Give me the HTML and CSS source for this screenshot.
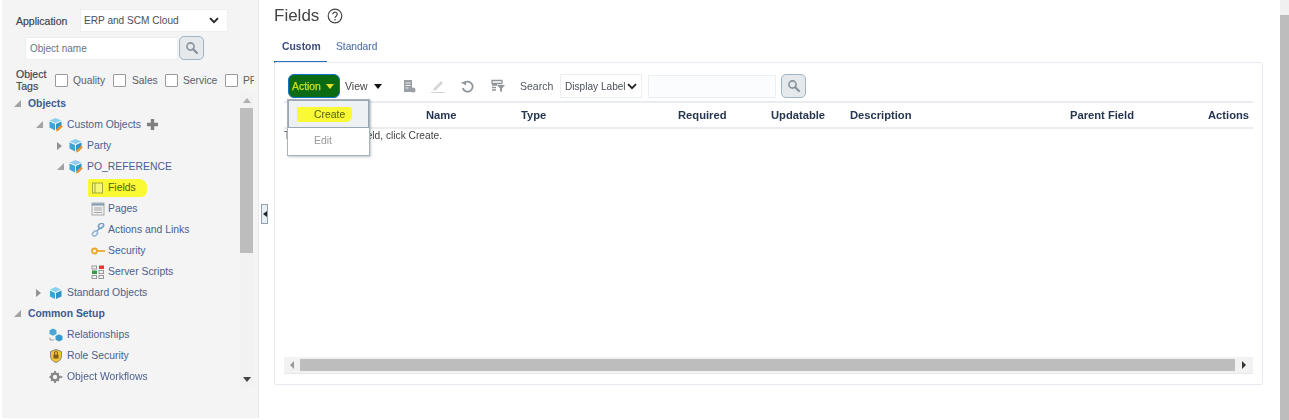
FILE: index.html
```html
<!DOCTYPE html>
<html lang="en">
<head>
<meta charset="utf-8">
<title>Fields</title>
<link rel="stylesheet" href="styles.css">
</head>
<body>
<svg class="defs" width="0" height="0" aria-hidden="true">
  <symbol id="i-cube" viewBox="0 0 14 14">
    <path d="M6.500 1 12 3.500 6.500 6 1 3.500Z" fill="#8ccfee"/>
    <path d="M1 4.500 6 7v6L1 10.500Z" fill="#3aa5d8"/>
    <path d="M7 7l5.500-2.500v6L7 13Z" fill="#2b94c8"/>
  </symbol>
  <symbol id="i-cube-edit" viewBox="0 0 14 14">
    <path d="M6.500 0 12.500 2.500 6.500 5 .5 2.500Z" fill="#8ccfee"/>
    <path d="M.5 3.500 6 6v6.500L.5 9.500Z" fill="#3aa5d8"/>
    <path d="M7 6l5.500-2.500v4L7 12Z" fill="#2b94c8"/>
    <path d="M7 13.500l.6-2.500 4.400-4.200 1.800 1.800-4.400 4.200Z" fill="#e8912d"/>
  </symbol>
  <symbol id="i-search" viewBox="0 0 14 14">
    <circle cx="5.500" cy="5.500" r="3.600" fill="none" stroke="#87929b" stroke-width="1.600"/>
    <path d="M8.200 8.200 12 12" stroke="#87929b" stroke-width="2.200" stroke-linecap="round"/>
  </symbol>
  <symbol id="i-chev" viewBox="0 0 10 7">
    <path d="M1 1.200 5 5.200 9 1.200" fill="none" stroke="#222" stroke-width="1.800"/>
  </symbol>
</svg>

<div class="page">
  <aside class="side">
    <div class="app-row">
      <span class="app-label">Application</span>
      <div class="fake-select app-select"><span>ERP and SCM Cloud</span><svg class="chev"><use href="#i-chev"/></svg></div>
    </div>
    <div class="search-row">
      <div class="fake-input side-input">Object name</div>
      <button class="search-btn" type="button" aria-label="Search"><svg class="search-ico"><use href="#i-search"/></svg></button>
    </div>
    <div class="tags-row">
      <span class="tags-label">Object Tags</span>
      <span class="cb"></span><span class="tag tag-q">Quality</span>
      <span class="cb"></span><span class="tag tag-s">Sales</span>
      <span class="cb"></span><span class="tag tag-v">Service</span>
      <span class="cb"></span><span class="tag">PF</span>
    </div>

    <div class="tree-wrap">
      <ul class="tree">
        <li class="row l0"><span class="tw tw-open"></span><span class="head-label">Objects</span></li>
        <li class="row l1"><span class="tw tw-open"></span><svg class="ico"><use href="#i-cube-edit"/></svg><span>Custom Objects</span>
          <svg class="plus" viewBox="0 0 13 13"><path d="M6.500 1v11M1 6.500h11" stroke="#7f7f7f" stroke-width="3.400"/></svg></li>
        <li class="row l2"><span class="tw tw-closed"></span><svg class="ico"><use href="#i-cube-edit"/></svg><span>Party</span></li>
        <li class="row l2"><span class="tw tw-open"></span><svg class="ico"><use href="#i-cube-edit"/></svg><span>PO_REFERENCE</span></li>
        <li class="row l3"><span class="hl hl-fields">
          <svg class="ico" viewBox="0 0 14 14"><rect x="1.500" y="2" width="10" height="10" fill="#f6f67a" stroke="#a5a83a"/><path d="M4 2v10" stroke="#a5a83a"/></svg><span>Fields</span></span></li>
        <li class="row l3"><svg class="ico" viewBox="0 0 14 14"><rect x="1" y="1" width="12" height="12" fill="#eee" stroke="#a8a8a8"/><path d="M1 2.500h12" stroke="#7f9ab5" stroke-width="2"/><path d="M3 6h8M3 8h8M3 10.500h8" stroke="#aaa"/></svg><span>Pages</span></li>
        <li class="row l3"><svg class="ico" viewBox="0 0 14 14"><path d="M5.500 8.500 8.500 5.500" stroke="#6f9fc8" stroke-width="1.600"/><rect x="7.500" y="0.800" width="5.500" height="4" rx="2" transform="rotate(-45 10 3)" fill="none" stroke="#6f9fc8" stroke-width="1.600"/><rect x="1.200" y="8.500" width="5.500" height="4" rx="2" transform="rotate(-45 4 10.500)" fill="none" stroke="#9ab8d2" stroke-width="1.600"/></svg><span>Actions and Links</span></li>
        <li class="row l3"><svg class="ico" viewBox="0 0 14 14"><circle cx="3.500" cy="7" r="2.500" fill="none" stroke="#eaa92e" stroke-width="1.800"/><path d="M6 7h8" stroke="#eaa92e" stroke-width="1.800"/></svg><span>Security</span></li>
        <li class="row l3"><svg class="ico" viewBox="0 0 14 14"><rect x="1" y="1" width="4.500" height="3" fill="none" stroke="#999"/><rect x="8" y="0.500" width="5" height="3.500" fill="#e33"/><rect x="1" y="5.500" width="5" height="3.500" fill="#3a9a4a"/><rect x="8" y="5.500" width="4.500" height="3" fill="none" stroke="#999"/><rect x="1" y="10.500" width="4.500" height="3" fill="none" stroke="#999"/><rect x="8" y="10.500" width="4.500" height="3" fill="none" stroke="#999"/></svg><span>Server Scripts</span></li>
        <li class="row l1"><span class="tw tw-closed"></span><svg class="ico"><use href="#i-cube"/></svg><span>Standard Objects</span></li>
        <li class="row l0"><span class="tw tw-open"></span><span class="head-label">Common Setup</span></li>
        <li class="row l1c"><svg class="ico" viewBox="0 0 14 14"><path d="M4 .5 7.500 2.200V6L4 7.700.5 6V2.200Z" fill="#4aa8d8"/><path d="M10 6.300 13.500 8v3.800L10 13.500 6.500 11.800V8Z" fill="#3a9ad0"/><path d="M1 9.500v2.500h4" fill="none" stroke="#9a9a9a"/></svg><span>Relationships</span></li>
        <li class="row l1c"><svg class="ico" viewBox="0 0 14 14"><path d="M7 .5 12.500 2.500V7c0 3.500-2.500 5.500-5.500 6.500C4 12.500 1.500 10.500 1.500 7V2.500Z" fill="#f2c230" stroke="#8a8a8a"/><rect x="4.500" y="5.500" width="5" height="4" fill="#7a5a20"/><path d="M5.500 5.500V4a1.500 1.500 0 0 1 3 0v1.500" fill="none" stroke="#7a5a20"/></svg><span>Role Security</span></li>
        <li class="row l1c"><svg class="ico" viewBox="0 0 14 14"><circle cx="6" cy="7" r="3.400" fill="none" stroke="#858585" stroke-width="2.400"/><path d="M6 1v2M6 11v2M0.500 7h2M9.500 7h2M2.200 3.200l1.400 1.400M9.800 3.200 8.400 4.600M2.200 10.800l1.400-1.400M9.800 10.800 8.400 9.400" stroke="#858585" stroke-width="1.800"/><path d="M11.500 5.500 14 7l-2.500 1.500Z" fill="#858585"/></svg><span>Object Workflows</span></li>
      </ul>
      <div class="tree-scroll">
        <span class="arrow-box"><span class="arr-up"></span></span>
        <span class="thumb-v"></span>
        <span class="spacer"></span>
        <span class="arrow-box"><span class="arr-down"></span></span>
      </div>
    </div>
  </aside>

  <div class="splitter"><span class="handle"><span class="arr-left-dark"></span></span></div>

  <main class="main">
    <div class="title-row">
      <h1 class="title">Fields</h1>
      <svg class="help" viewBox="0 0 16 16"><circle cx="8" cy="8" r="6.800" fill="none" stroke="#444" stroke-width="1.200"/><path d="M5.800 6.200a2.200 2.100 0 1 1 3.500 1.700c-.9.600-1.300 1-1.300 2" fill="none" stroke="#444" stroke-width="1.200"/><circle cx="8" cy="11.800" r=".8" fill="#444"/></svg>
    </div>
    <nav class="tabs">
      <span class="tab tab-on">Custom</span>
      <span class="tab">Standard</span>
    </nav>
    <section class="panel">
      <div class="toolbar">
        <div class="action-wrap">
          <button class="action" type="button">Action<span class="arr-yellow"></span></button>
          <div class="menu">
            <div class="menu-item menu-on"><span class="hl hl-create">Create</span></div>
            <div class="menu-item menu-off">Edit</div>
          </div>
        </div>
        <span class="view">View<span class="arr-black"></span></span>
        <svg class="tb-ico tb-first" viewBox="0 0 14 14"><path d="M2 1h8v12H2Z" fill="#9a9fa5"/><path d="M3.500 4h5M3.500 6.500h5M3.500 9h3" stroke="#eee"/><circle cx="11" cy="11" r="2.500" fill="#9a9fa5"/></svg>
        <svg class="tb-ico" viewBox="0 0 14 14"><path d="M3 9 10 2l2 2-7 7-3 1Z" fill="#d5d5d5"/><path d="M0 13.500h14" stroke="#d5d5d5"/></svg>
        <svg class="tb-ico" viewBox="0 0 14 14"><path d="M4 4.200a5 5 0 1 1-1.200 4.800" fill="none" stroke="#8b9298" stroke-width="1.700"/><path d="M1 3h5v4Z" fill="#8b9298" transform="rotate(-10 3 5)"/></svg>
        <svg class="tb-ico tb-last" viewBox="0 0 14 14"><path d="M1 1.500h10v3H1ZM1 6h5M1 8.500h4M1 11h4" fill="none" stroke="#8f969c" stroke-width="1.300"/><path d="M6 6h8l-3 3.500V13l-2-1V9.500Z" fill="#8f969c"/></svg>
        <span class="search-label">Search</span>
        <div class="fake-select tb-select"><span class="clip">Display Label</span><svg class="chev"><use href="#i-chev"/></svg></div>
        <div class="fake-input tb-input"></div>
        <button class="search-btn tb-btn" type="button" aria-label="Search"><svg class="search-ico"><use href="#i-search"/></svg></button>
      </div>

      <div class="thead">
        <span class="th c-sel"></span>
        <span class="th c-name">Name</span>
        <span class="th c-type">Type</span>
        <span class="th c-req">Required</span>
        <span class="th c-upd">Updatable</span>
        <span class="th c-desc">Description</span>
        <span class="th c-par">Parent Field</span>
        <span class="th">Actions</span>
      </div>
      <div class="tbody">To add a custom field, click Create.</div>
      <div class="hscroll">
        <span class="arrow-box-h"><span class="arr-left"></span></span>
        <span class="thumb-h"></span>
        <span class="arrow-box-h"><span class="arr-right"></span></span>
      </div>
    </section>
  </main>

  <div class="vscroll"><span class="vscroll-top"></span><span class="vscroll-thumb"></span></div>
</div>
</body>
</html>
```

FILE: styles.css
```css
* { box-sizing: border-box; }
html, body { margin: 0; padding: 0; background: #fff; }
body { font-family: "Liberation Sans", Arial, sans-serif; color: #444; overflow: hidden; }
.defs { position: absolute; }
.page { display: flex; width: 1289px; height: 420px; overflow: hidden; filter: blur(.45px); }

/* sidebar */
.side { width: 257px; height: 418px; margin-left: 2px; padding-top: 9px; background: #f4f4f4; border-right: 1px solid #e6e9ee; flex: none; }
.app-row { display: flex; align-items: center; height: 23px; padding-left: 14px; }
.app-label { width: 64px; font-size: 10.500px; color: #3f4650; -webkit-text-stroke: .2px #3f4650; }
.fake-select { display: flex; align-items: center; justify-content: space-between; background: #fff; border: 1px solid #eceef0; font-size: 10.100px; color: #4a5058; }
.app-select { width: 148px; height: 23px; padding: 0 8px 0 3px; }
.chev { width: 10px; height: 7px; flex: none; }
.search-row { display: flex; align-items: center; height: 24px; margin-top: 4px; padding-left: 23px; }
.fake-input { background: #fff; border: 1px solid #eceef0; font-size: 10px; color: #6b7280; display: flex; align-items: center; }
.side-input { width: 153px; height: 23px; padding-left: 4px; }
.search-btn { display: flex; align-items: center; justify-content: center; width: 25px; height: 24px; margin: 0 0 0 1px; padding: 0; background: #e6e9ec; border: 1px solid #9fb4c4; border-radius: 5px; }
.search-ico { width: 14px; height: 14px; }
.tags-row { display: flex; align-items: center; width: 252px; height: 24px; margin-top: 8px; padding-left: 14px; overflow: hidden; white-space: nowrap; }
.tags-label { width: 39px; flex: none; white-space: normal; font-size: 10.500px; line-height: 12px; color: #3f4650; -webkit-text-stroke: .2px #3f4650; }
.cb { width: 13px; height: 13px; flex: none; background: #fff; border: 1px solid #9a9a9a; border-radius: 1px; }
.tag { margin-left: 5px; font-size: 10.300px; color: #5a6068; flex: none; }
.tag-q { width: 40px; }
.tag-s { width: 33px; margin-left: 6px; }
.tag-v { width: 42px; }

.tree-wrap { display: flex; height: 294px; margin-top: 1px; padding-right: 5px; }
.tree { flex: 1; min-width: 0; margin: 0; padding: 0; list-style: none; }
.row { display: flex; align-items: center; height: 21px; font-size: 10.400px; color: #4b5f8e; white-space: nowrap; }
.l0 { padding-left: 12px; }
.l1 { padding-left: 34px; }
.l1c { padding-left: 47px; }
.l2 { padding-left: 55px; }
.l3 { padding-left: 89px; }
.tw { flex: none; width: 0; height: 0; border-style: solid; }
.tw-open { margin-right: 6px; border-width: 0 0 7px 7px; border-color: transparent transparent #a2a2a2 transparent; }
.tw-closed { margin-right: 8px; border-width: 4.500px 0 4.500px 5px; border-color: transparent transparent transparent #939393; }
.l0 .tw-open { margin-right: 7px; }
.l2 .tw-open { margin-right: 5px; }
.l2 .tw-closed { margin-right: 7px; }
.head-label { font-weight: bold; color: #3d5a94; font-size: 10.400px; }
.ico { width: 14px; height: 14px; margin-right: 4px; flex: none; }
.l3 .ico { margin-right: 3px; }
.plus { width: 13px; height: 13px; margin-left: 5px; }
.hl { background: #f9f934; }
.hl-fields { display: inline-flex; align-items: center; height: 18px; margin-left: -3px; padding: 0 11px 0 3px; color: #4f6210; border-radius: 2px 8px 6px 2px; }
.tree-scroll { display: flex; flex-direction: column; width: 13px; flex: none; background: #f2f2f2; }
.arrow-box { display: flex; align-items: center; justify-content: center; height: 15px; flex: none; }
.thumb-v { height: 145px; background: #bdbdbd; flex: none; }
.spacer { flex: 1; }
.arr-up { border-style: solid; border-width: 0 4px 5px 4px; border-color: transparent transparent #b0b0b0 transparent; }
.arr-down { border-style: solid; border-width: 5px 4px 0 4px; border-color: #444 transparent transparent transparent; }

/* splitter */
.splitter { display: flex; align-items: center; width: 15px; height: 428px; padding-left: 2px; flex: none; }
.handle { display: flex; align-items: center; justify-content: center; width: 7px; height: 20px; background: #e9eef3; border: 1px solid #8fa3b5; }
.arr-left-dark { border-style: solid; border-width: 3px 4px 3px 0; border-color: transparent #222 transparent transparent; }

/* main */
.main { display: flex; flex-direction: column; flex: 1; min-width: 0; padding: 6px 8px 0 0; }
.title-row { display: flex; align-items: center; height: 20px; }
.title { margin: 0; font-size: 17px; font-weight: normal; line-height: 20px; color: #444; }
.help { width: 16px; height: 16px; margin-left: 8px; }
.tabs { display: flex; height: 37px; padding-top: 11px; }
.tab { display: block; width: 53px; height: 26px; padding: 4px 0 0 8px; font-size: 10.200px; font-weight: normal; color: #5a78a8; white-space: nowrap; -webkit-text-stroke: .15px #5a78a8; }
.tab-on { border-bottom: 2px solid #2d6fb8; color: #3c4a7a; font-size: 10.400px; font-weight: bold; -webkit-text-stroke: 0; }
.tab + .tab { padding-left: 9px; }
.panel { display: flex; flex-direction: column; width: 989px; height: 323px; margin-top: -1px; padding: 0 9px; border: 1px solid #e5ebf1; border-radius: 2px; }
.toolbar { display: flex; align-items: center; height: 38px; padding: 8px 0 0 4px; flex: none; }
.action-wrap { position: relative; flex: none; }
.action { display: flex; align-items: center; width: 52px; height: 24px; margin: 0; padding: 0 0 0 3px; background: #0a6b12; border: 1px solid #1273c9; border-radius: 6px; font: normal 10.400px "Liberation Sans", Arial, sans-serif; color: #c8e020; -webkit-text-stroke: .25px #c8e020; }
.arr-yellow { margin-left: 5px; border-style: solid; border-width: 5px 4px 0 4px; border-color: #e3e32a transparent transparent transparent; }
.menu { position: absolute; top: 100%; left: -1px; z-index: 5; width: 83px; height: 57px; margin-top: 1px; background: #fff; border: 1px solid #a9b3bc; box-shadow: 1px 1px 2px rgba(70, 90, 110, .35); }
.menu-item { display: flex; align-items: center; font-size: 10.400px; }
.menu-on { height: 28px; padding-left: 8px; background: #eef1f3; border: 1px solid #9aa7b2; }
.hl-create { display: block; width: 55px; height: 15px; padding: 1px 0 0 17px; color: #50600f; line-height: 14px; border-radius: 1px 3px 6px 2px; white-space: nowrap; }
.menu-off { height: 25px; padding-left: 26px; color: #999; }
.view { display: flex; align-items: center; width: 36px; margin-left: 5px; font-size: 10.500px; color: #444; flex: none; }
.arr-black { margin-left: 6px; border-style: solid; border-width: 5px 4px 0 4px; border-color: #111 transparent transparent transparent; }
.tb-ico { width: 14px; height: 14px; margin-left: 15px; flex: none; }
.tb-first { margin-left: 21px; }
.tb-last { margin-left: 17px; }
.search-label { margin-left: 15px; width: 40px; font-size: 10.500px; color: #50565e; flex: none; }
.tb-select { width: 82px; height: 24px; padding: 0 4px; flex: none; }
.clip { width: 60px; overflow: hidden; white-space: nowrap; }
.tb-input { width: 128px; height: 23px; margin-left: 6px; background: #fbfcfd; flex: none; }
.tb-btn { margin-left: 5px; flex: none; }
.thead { display: flex; align-items: center; height: 28px; flex: none; border-top: 2px solid #e9edf1; border-bottom: 2px solid #e9edf1; }
.th { font-size: 11.200px; font-weight: bold; color: #263650; white-space: nowrap; flex: none; }
.c-sel { width: 142px; }
.c-name { width: 95px; }
.c-type { width: 157px; }
.c-req { width: 93px; }
.c-upd { width: 79px; }
.c-desc { width: 220px; }
.c-par { width: 138px; }
.tbody { flex: 1; padding-top: 1px; font-size: 10.200px; line-height: 12px; color: #444; }
.hscroll { display: flex; align-items: center; height: 17px; margin-bottom: 10px; flex: none; background: #f2f2f2; border-bottom: 1px solid #e8e8e8; }
.arrow-box-h { display: flex; align-items: center; justify-content: center; width: 16px; height: 100%; flex: none; }
.thumb-h { flex: 1; height: 12px; background: #bdbdbd; }
.arrow-box-h:last-child { width: 18px; }
.arr-left { border-style: solid; border-width: 4px 4px 4px 0; border-color: transparent #999 transparent transparent; }
.arr-right { border-style: solid; border-width: 4px 0 4px 4px; border-color: transparent transparent transparent #333; }

/* page scrollbar */
.vscroll { display: flex; flex-direction: column; width: 9px; height: 420px; flex: none; }
.vscroll-top { height: 15px; background: #f0f0f0; flex: none; }
.vscroll-thumb { flex: 1; background: #bdbdbd; }
```
